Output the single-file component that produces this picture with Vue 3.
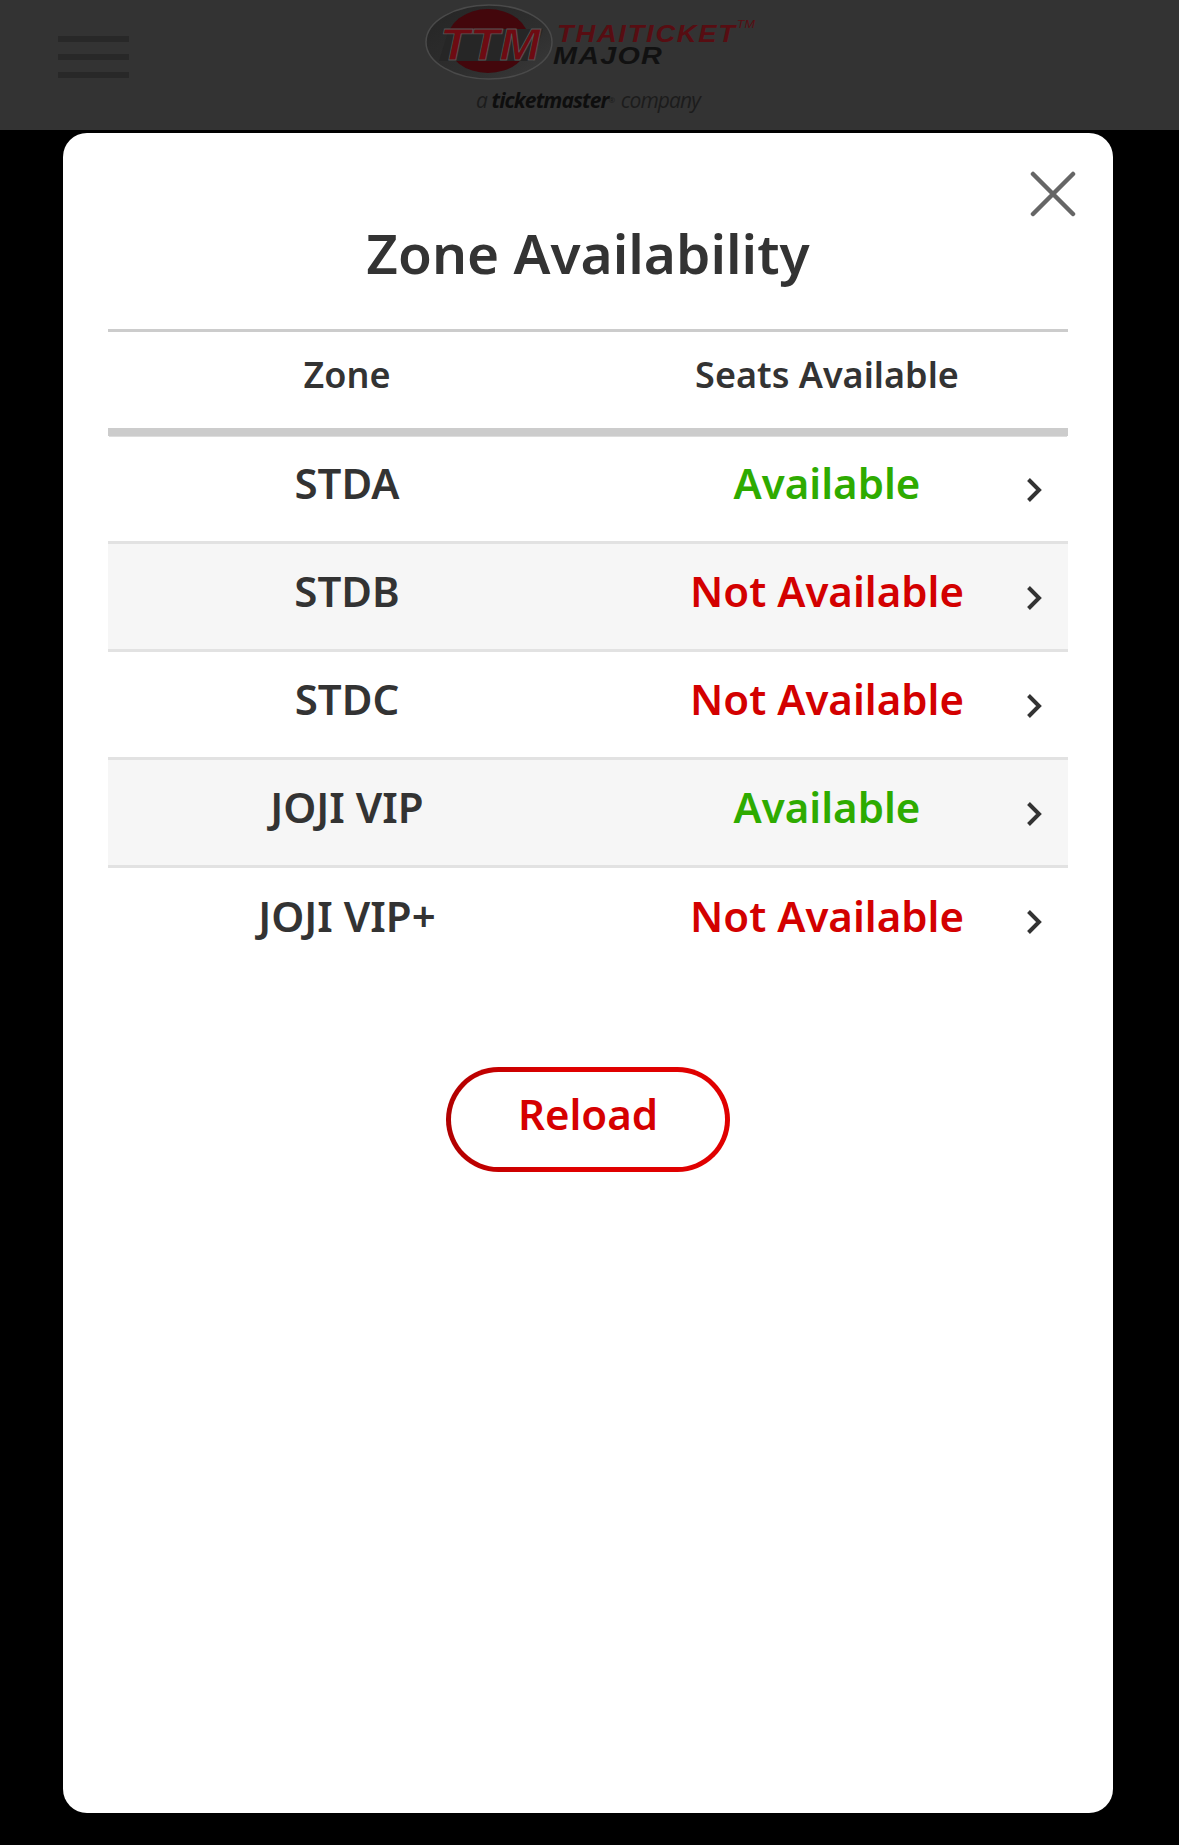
<script setup>
const zones = [
  { name: 'STDA', available: true },
  { name: 'STDB', available: false },
  { name: 'STDC', available: false },
  { name: 'JOJI VIP', available: true },
  { name: 'JOJI VIP+', available: false }
]
</script>

<template>
  <div class="page">
    <header class="topbar">
      <div class="burger"><span></span><span></span><span></span></div>
      <div class="logo">
        <div class="logo-top">
          <svg class="badge" width="128" height="76" viewBox="0 0 128 76">
            <defs>
              <linearGradient id="ring" x1="0" y1="0" x2="1" y2="1">
                <stop offset="0" stop-color="#252525" />
                <stop offset="0.6" stop-color="#2e2e2e" />
                <stop offset="1" stop-color="#3a3a3a" />
              </linearGradient>
            </defs>
            <ellipse cx="64" cy="38" rx="63" ry="37" fill="url(#ring)" stroke="#4a4a4a" stroke-width="1.5" />
            <ellipse cx="63" cy="37" rx="41" ry="32" fill="#43070c" />
            <path d="M24 25H118L108 57H14Z" fill="#262626" />
            <text class="ttm" x="65" y="56" text-anchor="middle" textLength="100" lengthAdjust="spacingAndGlyphs">TTM</text>
          </svg>
          <div class="brand">
            <div class="brand-thai">THAITICKET<sup>TM</sup></div>
            <div class="brand-major">MAJOR</div>
          </div>
        </div>
        <div class="tagline">a <b>ticketmaster</b><i class="reg">®</i> company</div>
      </div>
    </header>

    <section class="modal">
      <svg class="close" width="46" height="46" viewBox="0 0 46 46">
        <path d="M3 3L43 43M43 3L3 43" stroke="#666" stroke-width="4.5" stroke-linecap="round" fill="none" />
      </svg>
      <h1 class="title">Zone Availability</h1>

      <div class="table">
        <div class="head row-grid">
          <div>Zone</div>
          <div>Seats Available</div>
        </div>
        <div
          v-for="(z, i) in zones"
          :key="z.name"
          class="row row-grid"
          :class="{ odd: i % 2 === 1, last: i === zones.length - 1 }"
        >
          <div>{{ z.name }}</div>
          <div :class="z.available ? 'yes' : 'no'">{{ z.available ? 'Available' : 'Not Available' }}</div>
          <svg class="chev" width="16" height="26" viewBox="0 0 16 26">
            <path d="M2.5 2.5L13 13L2.5 23.5" stroke="#333" stroke-width="4" fill="none" />
          </svg>
        </div>
      </div>

      <div class="reload-wrap">
        <button class="reload">Reload</button>
      </div>
    </section>
  </div>
</template>

<style scoped>
.page {
  width: 1179px;
  height: 1845px;
  background: #000;
  font-family: "Noto Sans", sans-serif;
  color: #333;
  overflow: hidden;
}

.topbar {
  height: 130px;
  background: #333;
  display: flex;
  position: relative;
  justify-content: center;
}

.burger {
  position: absolute;
  left: 58px;
  top: 36px;
  width: 71px;
  display: flex;
  flex-direction: column;
  gap: 12px;
}
.burger span {
  height: 6px;
  background: #282828;
}

.logo {
  display: flex;
  flex-direction: column;
  align-items: center;
  padding-top: 4px;
}
.logo-top {
  display: flex;
  align-items: flex-start;
}
.badge {
  flex: none;
}
.brand {
  width: 198px;
  margin-left: 4px;
  padding-top: 19px;
  font-family: "Liberation Sans", sans-serif;
  font-style: italic;
  font-weight: 700;
  line-height: 22px;
}
.brand-thai {
  color: #570d12;
  font-size: 24px;
  letter-spacing: 1.5px;
  white-space: nowrap;
  transform: scaleX(1.14);
  transform-origin: left;
}
.brand-thai sup {
  font-size: 11px;
  font-weight: 400;
  line-height: 0;
  vertical-align: 14px;
  letter-spacing: 0;
}
.brand-major {
  color: #111;
  font-size: 23px;
  letter-spacing: 1px;
  margin-left: -4px;
  transform: scaleX(1.25);
  transform-origin: left;
}
.ttm {
  font-family: "Liberation Sans", sans-serif;
  font-size: 44px;
  font-style: italic;
  font-weight: 700;
  fill: #6e0b12;
  stroke: #555;
  stroke-width: 0.8;
}
.tagline {
  font-family: "Open Sans", sans-serif;
  font-size: 21px;
  font-weight: 400;
  line-height: 26px;
  color: #1c1c1c;
  margin: 7px 3px 0 0;
  letter-spacing: -0.9px;
  font-style: italic;
  white-space: nowrap;
}
.tagline b {
  font-weight: 700;
  color: #0e0e0e;
}
.reg {
  font-size: 8px;
  vertical-align: 5px;
  margin-right: 2px;
}

.modal {
  position: relative;
  width: 1050px;
  height: 1680px;
  margin: 3px 0 0 63px;
  background: #fff;
  border-radius: 24px;
  padding: 0 45px;
  box-sizing: border-box;
}

.close {
  position: absolute;
  top: 38px;
  right: 37px;
}

.title {
  margin: 0;
  padding-top: 80px;
  height: 196px;
  box-sizing: border-box;
  text-align: center;
  font-size: 55px;
  line-height: 80px;
  font-weight: 600;
  color: #333;
}

.table {
  width: 960px;
}

.row-grid {
  display: grid;
  grid-template-columns: 478px 482px;
  text-align: center;
  align-items: center;
}

.head {
  height: 107px;
  box-sizing: border-box;
  border-top: 3px solid #ccc;
  border-bottom: 8px solid #ccc;
  box-shadow: 0 2px 0 -1px #ddd;
  font-size: 36px;
  font-weight: 600;
  padding-bottom: 11px;
}

.row {
  position: relative;
  height: 108px;
  box-sizing: border-box;
  border-bottom: 3px solid #e2e2e2;
  font-size: 42px;
  font-weight: 600;
  padding-bottom: 13px;
}
.row.odd {
  background: #f6f6f6;
}
.row.last {
  border-bottom: none;
}

.yes {
  color: #2eab00;
}
.no {
  color: #d30000;
}

.chev {
  position: absolute;
  right: 26px;
  top: 41px;
}

.reload-wrap {
  display: flex;
  justify-content: center;
  padding-top: 91px;
}
.reload {
  width: 284px;
  height: 105px;
  box-sizing: border-box;
  border: 5px solid transparent;
  border-radius: 53px;
  background: linear-gradient(#fff, #fff) padding-box, linear-gradient(90deg, #b00000, #e00000 40%) border-box;
  color: #d60000;
  font-family: "Noto Sans", sans-serif;
  font-size: 42px;
  font-weight: 600;
  padding: 0 0 13px;
}
</style>

<style>
body {
  background: #000;
}
</style>
